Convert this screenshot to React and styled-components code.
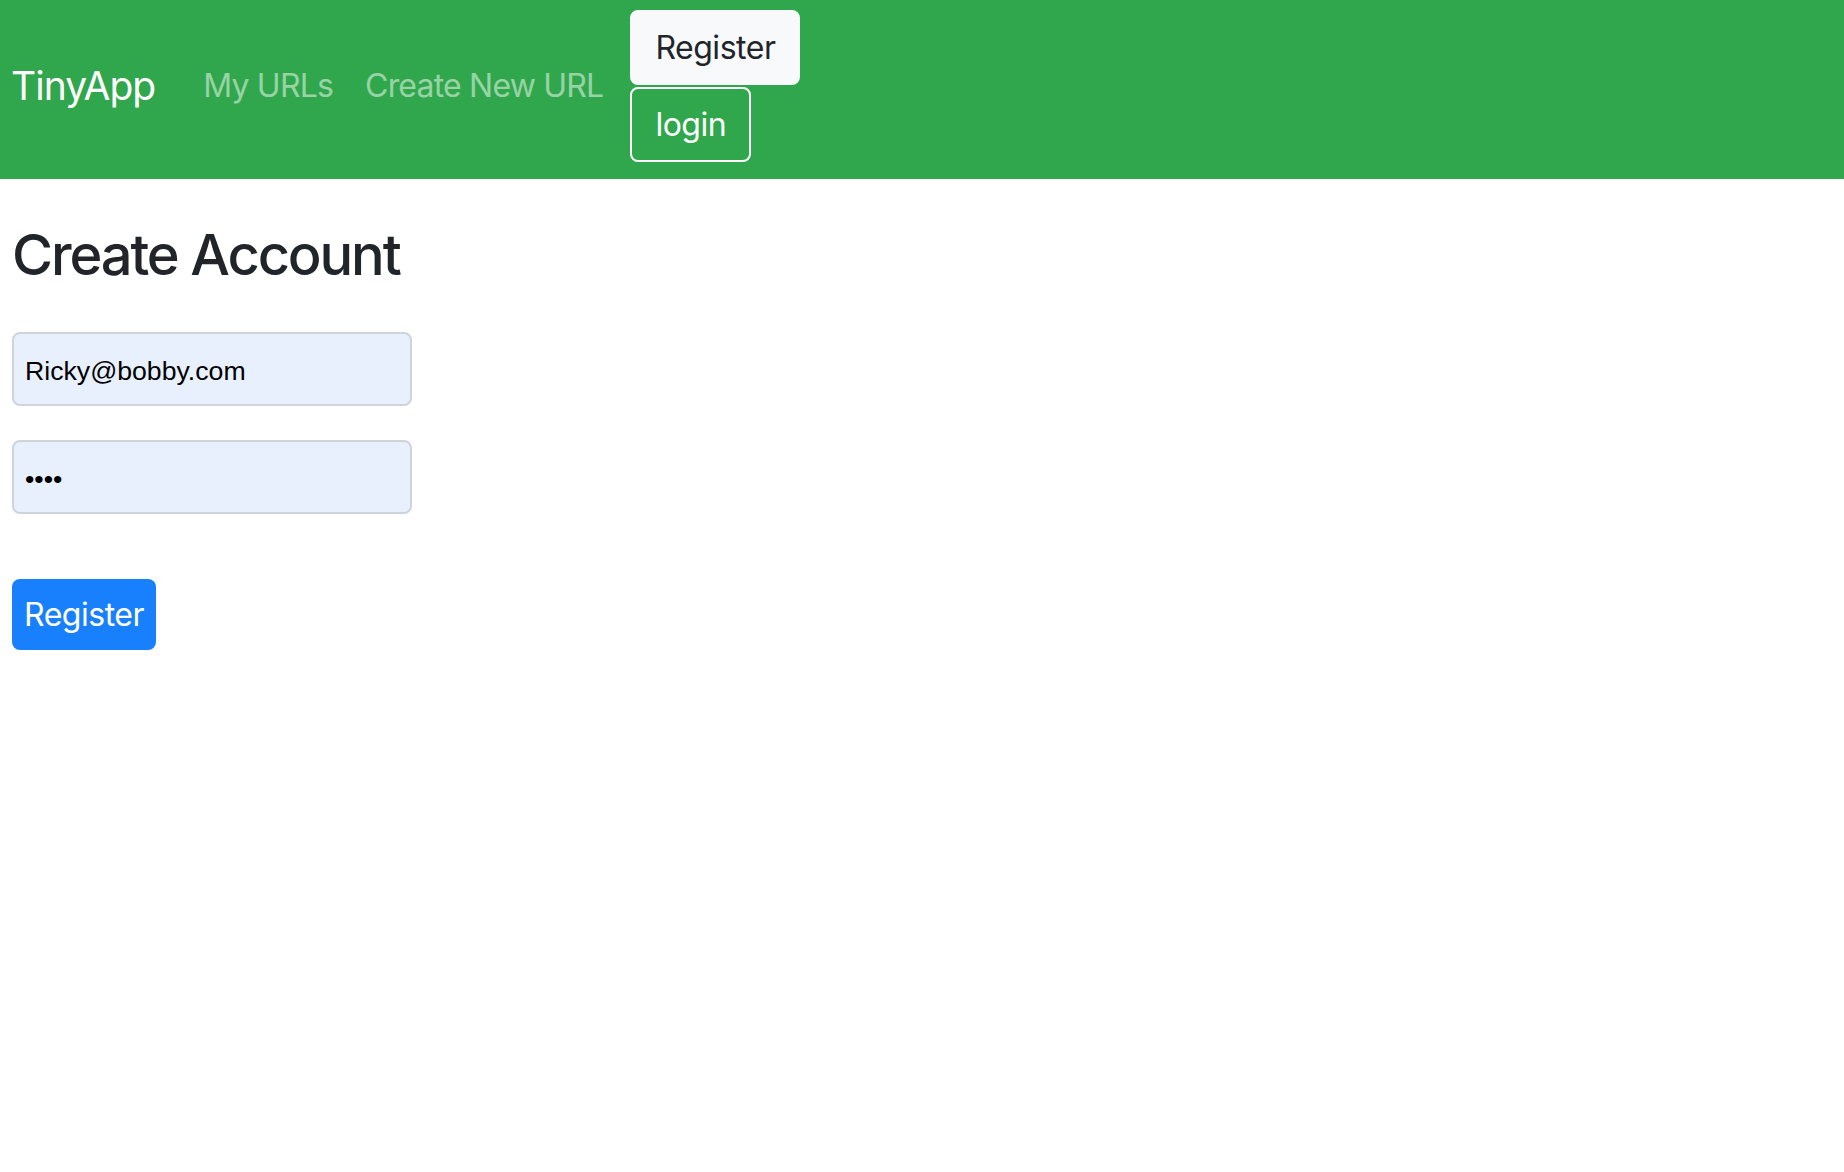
import { useState } from 'react'
import styled, { createGlobalStyle } from 'styled-components'

const GlobalStyle = createGlobalStyle`
html, body {
  margin: 0;
  padding: 0;
  background: #fff;
}

body {
  font-family: Inter, "Noto Sans", sans-serif;
  color: #212529;
}
`

const Navbar = styled.nav`
display: flex;
align-items: center;
background: #30a74c;
padding: 10px 12px 17px 11px;
`

const Brand = styled.a`
font-size: 39px;
line-height: 60px;
letter-spacing: -0.025em;
color: #fff;
text-decoration: none;
margin-right: 32px;
`

const NavLink = styled.a`
font-size: 32px;
line-height: 48px;
letter-spacing: -0.025em;
padding: 0 16px;
color: rgba(255, 255, 255, 0.5);
text-decoration: none;
`

const ButtonStack = styled.div`
display: flex;
flex-direction: column;
align-items: flex-start;
gap: 2px;
margin-left: 11px;
`

const NavButton = styled.button`
font-family: inherit;
font-size: 32px;
line-height: 47px;
letter-spacing: -0.015em;
padding: 12px 23px;
border-radius: 8px;
border: 2px solid ${p => p.$outline ? '#fff' : '#f8f9fa'};
background: ${p => p.$outline ? 'transparent' : '#f8f9fa'};
color: ${p => p.$outline ? '#fff' : '#212529'};
cursor: pointer;
`

const Main = styled.main`
padding: 41px 12px 0;
`

const Title = styled.h1`
font-size: 56px;
font-weight: 500;
line-height: 70px;
letter-spacing: -0.038em;
margin: 0 0 42px;
`

const Form = styled.form`
display: flex;
flex-direction: column;
align-items: flex-start;
`

const Field = styled.input`
box-sizing: border-box;
width: 400px;
height: 74px;
margin-bottom: ${p => p.$last ? '65px' : '34px'};
padding: 4px 11px 0;
font-family: "Liberation Sans", Arial, sans-serif;
font-size: 26.67px;
color: #000;
background: #e8f0fe;
border: 2px solid #ced4da;
border-radius: 8px;
outline: none;
`

const SubmitButton = styled.button`
font-family: inherit;
font-size: 32px;
line-height: 71px;
letter-spacing: -0.015em;
padding: 0 12px;
border: none;
border-radius: 8px;
background: #187ffd;
color: #fff;
cursor: pointer;
`

export default function App() {
  const [email, setEmail] = useState('Ricky@bobby.com')
  const [password, setPassword] = useState('1234')

  return (
  <>
    <GlobalStyle />
    <Navbar>
      <Brand href="#">TinyApp</Brand>
      <NavLink href="#">My URLs</NavLink>
      <NavLink href="#">Create New URL</NavLink>
      <ButtonStack>
        <NavButton>Register</NavButton>
        <NavButton $outline>login</NavButton>
      </ButtonStack>
    </Navbar>

    <Main>
      <Title>Create Account</Title>
      <Form onSubmit={e => e.preventDefault()}>
        <Field type="email" value={email} onChange={e => setEmail(e.target.value)} />
        <Field type="password" value={password} onChange={e => setPassword(e.target.value)} $last />
        <SubmitButton type="submit">Register</SubmitButton>
      </Form>
    </Main>
  </>
  )
}
